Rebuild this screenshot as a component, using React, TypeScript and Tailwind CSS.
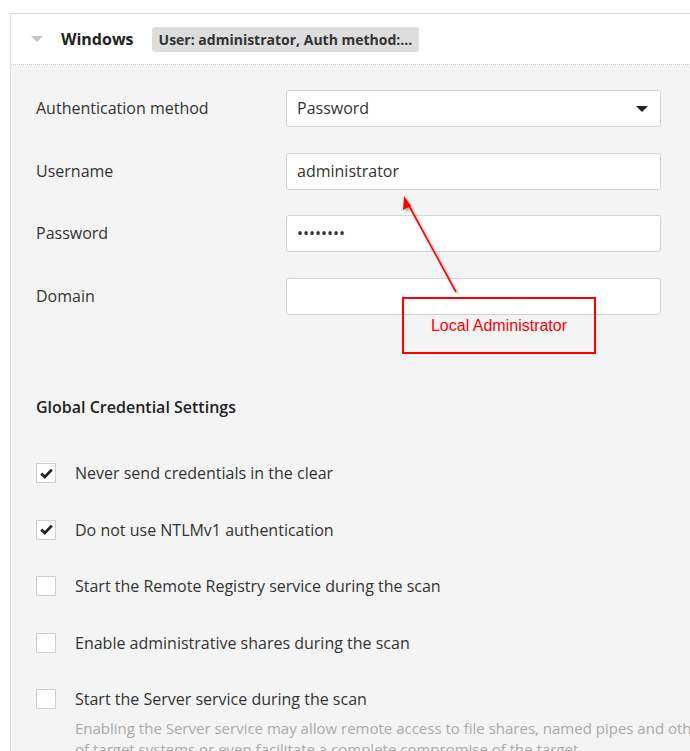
import React from "react";

const fields = [
  { label: "Authentication method", value: "Password", select: true },
  { label: "Username", value: "administrator" },
  { label: "Password", value: "••••••••" },
  { label: "Domain", value: "" },
];

const options = [
  { label: "Never send credentials in the clear", checked: true },
  { label: "Do not use NTLMv1 authentication", checked: true },
  { label: "Start the Remote Registry service during the scan", checked: false },
  { label: "Enable administrative shares during the scan", checked: false },
  { label: "Start the Server service during the scan", checked: false },
];

function Check({ checked }: { checked: boolean }) {
  return (
    <div className="w-[20px] h-[20px] bg-white border border-[#cfcfcf] flex items-center justify-center shrink-0">
      {checked && (
        <svg width="13" height="11" viewBox="0 0 13 11">
          <path d="M1.2 5.6 L4.8 9 L11.8 1.6" fill="none" stroke="#222" strokeWidth="2.8" />
        </svg>
      )}
    </div>
  );
}

export default function App() {
  return (
    <div className="w-[690px] h-[751px] overflow-hidden bg-white pt-[13px] pl-[10px] font-['Open_Sans',sans-serif] text-[#333]">
      <div className="relative border-t border-l border-[#dcdcdc] h-full w-[780px]">
        {/* Header */}
        <div className="h-[51px] flex items-center bg-white border-b border-dotted border-[#cfcfcf]">
          <div className="ml-[20px] w-0 h-0 border-l-[6px] border-r-[6px] border-t-[6px] border-l-transparent border-r-transparent border-t-[#c4c4c4]" />
          <div className="ml-[18px] text-[16px] font-bold text-[#222]">Windows</div>
          <div className="ml-[18px] bg-[#dddddd] rounded-[3px] px-[7px] h-[25px] flex items-center text-[14px] font-bold text-[#333]">
            User: administrator, Auth method:...
          </div>
        </div>

        {/* Body */}
        <div className="bg-[#f4f4f4] h-full pl-[25px]">
          <div className="pt-[25px] flex flex-col gap-[25.7px]">
            {fields.map((f) => (
              <div key={f.label} className="flex items-center h-[37px]">
                <div className="w-[250px] text-[16px] text-[#333] -mt-[1px]">{f.label}</div>
                <div className="w-[375px] h-[37px] bg-white border border-[#d4d4d4] rounded-[3px] flex items-center px-[10px] text-[16px] text-[#333]">
                  <span className="flex-1 -mt-[1px]">{f.value}</span>
                  {f.select && (
                    <div className="w-0 h-0 border-l-[6px] border-r-[6px] border-t-[6px] border-l-transparent border-r-transparent border-t-[#222] mr-[2px]" />
                  )}
                </div>
              </div>
            ))}
          </div>

          <div className="mt-[80px] text-[16px] font-semibold text-[#222]">Global Credential Settings</div>

          <div className="mt-[44px] flex flex-col gap-[36.5px]">
            {options.map((o) => (
              <div key={o.label} className="flex items-center gap-[19px] h-[20px]">
                <Check checked={o.checked} />
                <div className="text-[16px] text-[#333] whitespace-nowrap">{o.label}</div>
              </div>
            ))}
          </div>
          <div className="ml-[39px] mt-[9px] text-[15px] text-[#aaa] leading-[21px] whitespace-nowrap">
            <div>Enabling the Server service may allow remote access to file shares, named pipes and other resources</div>
            <div>of target systems or even facilitate a complete compromise of the target.</div>
          </div>
        </div>

        {/* Annotation */}
        <svg className="absolute left-0 top-0 pointer-events-none" width="680" height="400">
          <defs>
            <filter id="sh" x="-50%" y="-50%" width="200%" height="200%">
              <feDropShadow dx="2" dy="2" stdDeviation="1.2" floodColor="#000" floodOpacity="0.3" />
            </filter>
          </defs>
          <g filter="url(#sh)">
            <line x1="445" y1="278" x2="396" y2="188" stroke="#ff0000" strokeWidth="1.6" />
            <path d="M393 182 L392 196 L400 192 Z" fill="#ff0000" />
          </g>
        </svg>
        <div className="absolute left-[391px] top-[283px] w-[194px] h-[57px] border-2 border-[#ff0000] flex items-center justify-center text-[16px] text-[#ff0000] font-['Liberation_Sans',sans-serif]">
          Local Administrator
        </div>
      </div>
    </div>
  );
}
